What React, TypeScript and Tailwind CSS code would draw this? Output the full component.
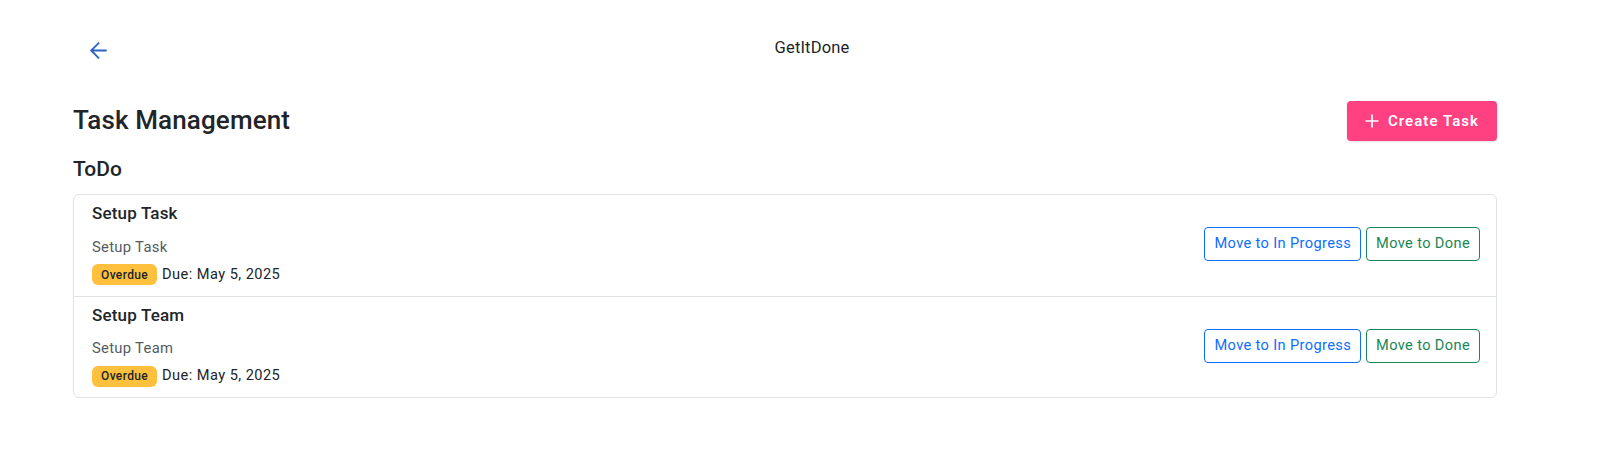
import React from 'react';

const tasks = [
  { id: 1, title: 'Setup Task', desc: 'Setup Task', due: 'May 5, 2025' },
  { id: 2, title: 'Setup Team', desc: 'Setup Team', due: 'May 5, 2025' },
];

const ArrowBack = () => (
  <svg viewBox="0 0 24 24" className="w-[25px] h-[25px]" fill="none" stroke="#2b62c4" strokeWidth="1.8" strokeLinecap="square">
    <path d="M12 5l-7 7 7 7M5.5 12H19" />
  </svg>
);

export default function App() {
  return (
    <div className="min-h-screen bg-white text-[#212529]" style={{ fontFamily: 'Roboto, "Liberation Sans", sans-serif' }}>
      {/* Top bar */}
      <div className="relative mt-4 h-16 flex items-center pl-[86px]">
        <button className="w-[25px] h-[25px] flex items-center justify-center mt-[4px]">
          <ArrowBack />
        </button>
        <div className="absolute left-0 right-0 text-center pointer-events-none pl-[18px] text-[16.5px] tracking-[0.01em] text-[#212529]">
          GetItDone
        </div>
      </div>

      <div className="ml-[73px] w-[1424px]">
        {/* Heading row */}
        <div className="flex items-center justify-between mt-[21px]">
          <h1 className="text-[26px] font-medium leading-[1.2] tracking-[0.005em]">Task Management</h1>
          <button className="h-10 w-[150px] rounded bg-[#ff4081] text-white text-[15px] font-semibold tracking-[0.07em] flex items-center justify-center gap-[5px] shadow-sm">
            <svg viewBox="0 0 24 24" className="w-[22px] h-[22px] -ml-[4px]" fill="none" stroke="white" strokeWidth="1.9">
              <path d="M12 5v14M5 12h14" />
            </svg>
            Create Task
          </button>
        </div>

        <h2 className="text-[21px] font-medium leading-[1.2] mt-[16px] mb-[12px]">ToDo</h2>

        {/* Task list */}
        <div className="border border-[#dee2e6] rounded-[6px]">
          {tasks.map((t, i) => (
            <div
              key={t.id}
              className={`flex items-center justify-between pl-[18px] pr-[16px] pt-[8px] pb-[10px] ${i > 0 ? 'border-t border-[#dee2e6]' : ''}`}
            >
              <div>
                <div className="text-[17px] font-medium leading-[1.2] tracking-[0.01em] mb-[12px]">{t.title}</div>
                <div className="text-[14.8px] text-[#555b61] leading-[1.5] tracking-[0.02em] mb-[6px]">{t.desc}</div>
                <div className="flex items-center gap-[5px]">
                  <span className="bg-[#ffc03d] text-[#212529] text-[12px] font-medium tracking-[0.03em] rounded-[6px] px-[9px] h-[21px] flex items-center">
                    Overdue
                  </span>
                  <span className="text-[14.6px] leading-[1.5] tracking-[0.03em]">Due: {t.due}</span>
                </div>
              </div>
              <div className="flex items-center gap-[5px]">
                <button className="h-[34px] px-[9px] rounded-[4px] border border-[#0d6efd] text-[#0d6efd] text-[14.6px] tracking-[0.025em] bg-white">
                  Move to In Progress
                </button>
                <button className="h-[34px] px-[9px] rounded-[4px] border border-[#198754] text-[#198754] text-[14.6px] tracking-[0.025em] bg-white">
                  Move to Done
                </button>
              </div>
            </div>
          ))}
        </div>
      </div>
    </div>
  );
}
